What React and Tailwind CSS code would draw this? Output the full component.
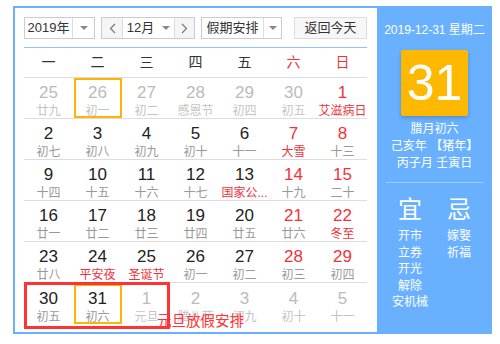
const weeks = [
  [['25', '廿九', 'o'], ['26', '初一', 'o'], ['27', '初二', 'o'], ['28', '感恩节', 'o'], ['29', '初四', 'o'], ['30', '初五', 'o'], ['1', '艾滋病日', 'rr']],
  [['2', '初七'], ['3', '初八'], ['4', '初九'], ['5', '初十'], ['6', '十一'], ['7', '大雪', 'rr'], ['8', '十三', 'r']],
  [['9', '十四'], ['10', '十五'], ['11', '十六'], ['12', '十七'], ['13', '国家公...', 'f'], ['14', '十九', 'r'], ['15', '二十', 'r']],
  [['16', '廿一'], ['17', '廿二'], ['18', '廿三'], ['19', '廿四'], ['20', '廿五'], ['21', '廿六', 'r'], ['22', '冬至', 'rr']],
  [['23', '廿八'], ['24', '平安夜', 'f'], ['25', '圣诞节', 'f'], ['26', '初一'], ['27', '初二'], ['28', '初三', 'r'], ['29', '初四', 'r']],
  [['30', '初五'], ['31', '初六'], ['1', '元旦', 'o'], ['2', '腊八节', 'o'], ['3', '初九', 'o'], ['4', '初十', 'o'], ['5', '十一', 'o']],
]

const weekdays = ['一', '二', '三', '四', '五', '六', '日']

function Arrow() {
  return <span className="w-0 h-0 border-x-[4px] border-x-transparent border-t-[4px] border-t-[#888]" />
}

function Chevron({ left }) {
  return (
    <svg width="7" height="11" viewBox="0 0 7 11" fill="none" stroke="#777" strokeWidth="1.2">
      <path d={left ? 'M6 1 L1.5 5.5 L6 10' : 'M1 1 L5.5 5.5 L1 10'} />
    </svg>
  )
}

function DayCell({ day, selected }) {
  const [num, lunar, kind] = day
  let numColor = 'text-[#222]'
  let lunarColor = 'text-[#999]'
  if (kind === 'o') {
    numColor = 'text-[#bbb]'
    lunarColor = 'text-[#c4c4c4]'
  } else if (kind === 'r') {
    numColor = 'text-[#f2323a]'
  } else if (kind === 'rr') {
    numColor = 'text-[#f2323a]'
    lunarColor = 'text-[#f2323a]'
  } else if (kind === 'f') {
    lunarColor = 'text-[#f2323a]'
  }
  return (
    <div className="flex justify-center">
      <div
        className={`w-[48px] h-[40px] flex flex-col items-center pt-[2px] ${selected ? 'border-[2px] border-[#ffb400]' : 'border-[2px] border-transparent'}`}
      >
        <span className={`text-[17px] leading-[22px] ${numColor}`}>{num}</span>
        <span className={`text-[12px] leading-[14px] whitespace-nowrap ${lunarColor}`}>{lunar}</span>
      </div>
    </div>
  )
}

export default function App() {
  return (
    <div
      className="w-[500px] h-[344px] bg-white pt-[6px] pl-[13px]"
      style={{ fontFamily: '"Liberation Sans", "Noto Sans CJK SC", sans-serif' }}
    >
      <div className="w-[479px] h-[328px] bg-[#69b1ff] flex pl-[2px] py-[2px]">
        <div className="relative w-[362px] bg-white pl-[9px] pt-[9px]">
          <div className="flex items-center h-[22px] text-[13px] text-[#333]">
            <div className="flex h-[22px] w-[71px] border border-[#ccc]">
              <span className="flex-1 flex items-center justify-center">2019年</span>
              <span className="w-[22px] border-l border-[#ddd] flex items-center justify-center"><Arrow /></span>
            </div>
            <div className="flex h-[22px] w-[94px] ml-[6px] border border-[#ccc]">
              <span className="w-[21px] bg-[#f5f5f5] border-r border-[#ddd] flex items-center justify-center"><Chevron left /></span>
              <span className="flex-1 flex items-center justify-center gap-[8px]">12月<Arrow /></span>
              <span className="w-[20px] bg-[#f5f5f5] border-l border-[#ddd] flex items-center justify-center"><Chevron /></span>
            </div>
            <div className="flex h-[22px] w-[81px] ml-[6px] border border-[#ccc]">
              <span className="flex-1 flex items-center justify-center">假期安排</span>
              <span className="w-[18px] border-l border-[#ddd] flex items-center justify-center"><Arrow /></span>
            </div>
            <div className="h-[22px] w-[73px] ml-[12px] border border-[#ddd] bg-[#f7f7f7] flex items-center justify-center">返回今天</div>
          </div>
          <div className="w-[343px] mt-[8px] border-t border-[#8fc3ff]">
            <div className="grid grid-cols-7 h-[30px] items-center border-b border-[#ddd] text-[14px]">
              {weekdays.map((w, i) => (
                <span key={w} className={`text-center ${i > 4 ? 'text-[#f2323a]' : 'text-[#333]'}`}>{w}</span>
              ))}
            </div>
            {weeks.map((week, wi) => (
              <div key={wi} className={`grid grid-cols-7 h-[41px] items-center ${wi < 5 ? 'border-b border-[#ddd]' : ''}`}>
                {week.map((d, di) => (
                  <DayCell key={di} day={d} selected={(wi === 0 && di === 1) || (wi === 5 && di === 1)} />
                ))}
              </div>
            ))}
          </div>
          <div className="absolute left-[9px] top-[274px] w-[146px] h-[47px] border-[3px] border-[#f33]" />
          <span className="absolute left-[142px] top-[304px] text-[14.5px] leading-[18px] text-[#f33] whitespace-nowrap">元旦放假安排</span>
        </div>
        <div className="w-[115px] -mt-[2px] flex flex-col items-center text-white">
          <div className="mt-[16px] text-[12px] leading-[16px] whitespace-nowrap">2019-12-31 星期二</div>
          <div className="mt-[12px] w-[67px] h-[66px] bg-[#ffb800] rounded-[2px] shadow-[0_2px_4px_rgba(0,0,0,0.2)] flex items-center justify-center text-[50px] leading-none">31</div>
          <div className="mt-[5px] text-[12px] leading-[17px] flex flex-col items-center">
            <span>腊月初六</span>
            <span className="whitespace-nowrap">己亥年 【猪年】</span>
            <span className="whitespace-nowrap">丙子月 壬寅日</span>
          </div>
          <div className="mt-[10px] w-[98px] border-t border-[#9fcdff]" />
          <div className="mt-[12px] flex gap-[9px] text-[12px] leading-[16.5px]">
            <div className="flex flex-col items-center w-[40px] whitespace-nowrap">
              <span className="text-[24px] leading-[30px] mb-[3px]">宜</span>
              <span>开市</span>
              <span>立券</span>
              <span>开光</span>
              <span>解除</span>
              <span>安机械</span>
            </div>
            <div className="flex flex-col items-center w-[40px] whitespace-nowrap">
              <span className="text-[24px] leading-[30px] mb-[3px]">忌</span>
              <span>嫁娶</span>
              <span>祈福</span>
            </div>
          </div>
        </div>
      </div>
    </div>
  )
}
